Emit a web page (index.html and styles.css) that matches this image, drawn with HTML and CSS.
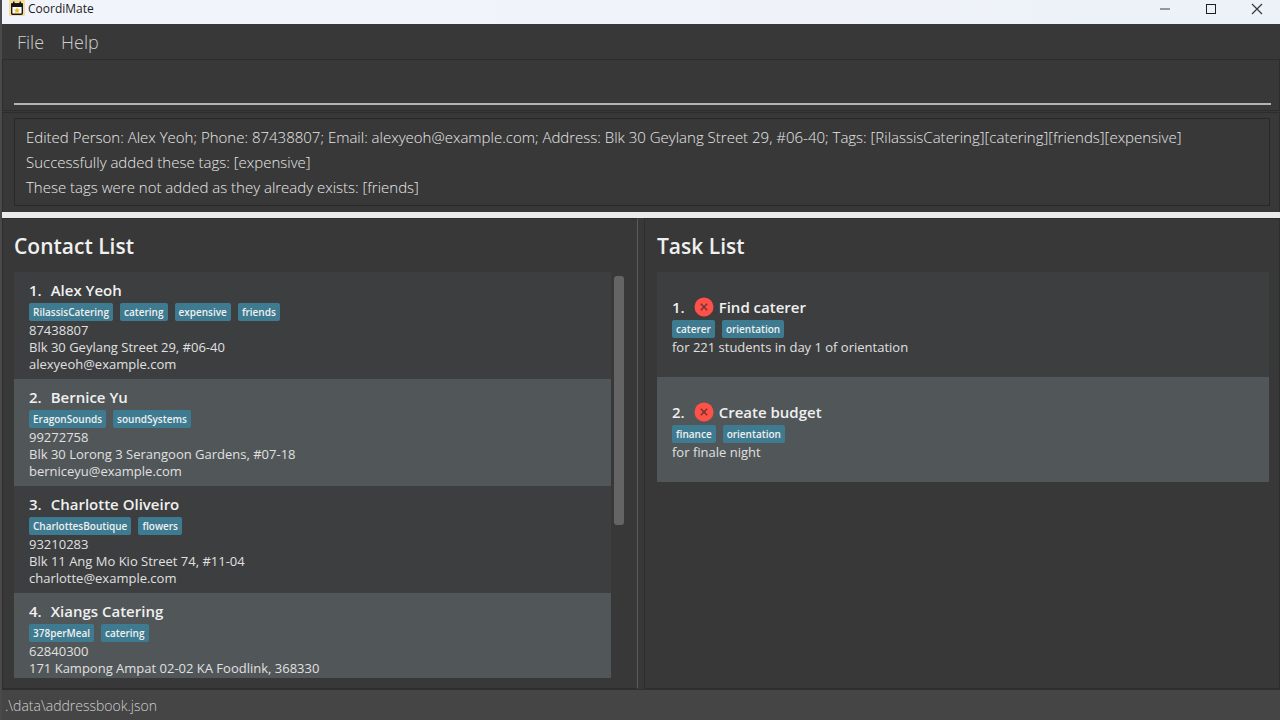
FILE: index.html
```html
<!DOCTYPE html>
<html lang="en">
<head>
<meta charset="utf-8">
<title>CoordiMate</title>
<link rel="stylesheet" href="styles.css">
</head>
<body>
<div class="window">
  <header class="titlebar">
    <svg class="app-icon" viewBox="0 0 16 16" aria-hidden="true">
      <rect width="16" height="16" rx="1" fill="#f6dc95"/>
      <path d="M2 3.500h2V1.500h1.500v2h5v-2H12v2h2V7H2z" fill="#15171c"/>
      <rect x="2.700" y="4" width="10.600" height="10.300" rx="1" fill="#fff" stroke="#15171c" stroke-width="1.400"/>
      <path d="M2.500 3.500h11V7h-11z" fill="#15171c"/>
      <path d="M8 7.600l1 1.700 1.900.4-1.300 1.400.2 1.900L8 12.200 6.200 13l.2-1.900-1.300-1.400L7 9.300z" fill="#f8b91c"/>
    </svg>
    <span class="app-name">CoordiMate</span>
    <div class="window-controls">
      <button class="window-button" aria-label="Minimize"><svg viewBox="0 0 12 12"><path d="M1 6h10" stroke="#777b80" stroke-width="1.500"/></svg></button>
      <button class="window-button" aria-label="Maximize"><svg viewBox="0 0 12 12"><rect x="1.500" y="1.500" width="9" height="9" fill="none" stroke="#1d1f22"/></svg></button>
      <button class="window-button" aria-label="Close"><svg viewBox="0 0 12 12"><path d="M1 1l10 10M11 1L1 11" stroke="#34373b" stroke-width="1.200"/></svg></button>
    </div>
  </header>
  <nav class="menubar">
    <button class="menu">File</button>
    <button class="menu">Help</button>
  </nav>
  <div class="command-pane">
    <input class="command-box" type="text" aria-label="Command">
  </div>
  <div class="result-pane">
    <textarea class="result-box" rows="3" readonly aria-label="Result">Edited Person: Alex Yeoh; Phone: 87438807; Email: alexyeoh@example.com; Address: Blk 30 Geylang Street 29, #06-40; Tags: [RilassisCatering][catering][friends][expensive]
Successfully added these tags: [expensive]
These tags were not added as they already exists: [friends]</textarea>
  </div>
  <main class="panels">
    <section class="panel contacts">
      <h1 class="panel-title">Contact List</h1>
      <div class="scroll-area">
        <ul class="list">
          <li class="card">
            <h2 class="card-title"><span class="index">1.</span>Alex Yeoh</h2>
            <div class="tags"><span class="tag">RilassisCatering</span><span class="tag">catering</span><span class="tag">expensive</span><span class="tag">friends</span></div>
            <p class="detail">87438807</p>
            <p class="detail">Blk 30 Geylang Street 29, #06-40</p>
            <p class="detail">alexyeoh@example.com</p>
          </li>
          <li class="card">
            <h2 class="card-title"><span class="index">2.</span>Bernice Yu</h2>
            <div class="tags"><span class="tag">EragonSounds</span><span class="tag">soundSystems</span></div>
            <p class="detail">99272758</p>
            <p class="detail">Blk 30 Lorong 3 Serangoon Gardens, #07-18</p>
            <p class="detail">berniceyu@example.com</p>
          </li>
          <li class="card">
            <h2 class="card-title"><span class="index">3.</span>Charlotte Oliveiro</h2>
            <div class="tags"><span class="tag">CharlottesBoutique</span><span class="tag">flowers</span></div>
            <p class="detail">93210283</p>
            <p class="detail">Blk 11 Ang Mo Kio Street 74, #11-04</p>
            <p class="detail">charlotte@example.com</p>
          </li>
          <li class="card">
            <h2 class="card-title"><span class="index">4.</span>Xiangs Catering</h2>
            <div class="tags"><span class="tag">378perMeal</span><span class="tag">catering</span></div>
            <p class="detail">62840300</p>
            <p class="detail">171 Kampong Ampat 02-02 KA Foodlink, 368330</p>
          </li>
        </ul>
        <div class="scrollbar"><div class="thumb"></div></div>
      </div>
    </section>
    <section class="panel tasks">
      <h1 class="panel-title">Task List</h1>
      <ul class="list">
        <li class="card task">
          <h2 class="card-title"><span class="index">1.</span><svg class="status-icon" viewBox="0 0 20 20" role="img" aria-label="Not done"><circle cx="10" cy="10" r="9.500" fill="#ff5148"/><path d="M6.800 6.800l6.400 6.400M13.200 6.800l-6.400 6.400" stroke="#6d3533" stroke-width="1.500"/></svg>Find caterer</h2>
          <div class="tags"><span class="tag">caterer</span><span class="tag">orientation</span></div>
          <p class="detail">for 221 students in day 1 of orientation</p>
        </li>
        <li class="card task">
          <h2 class="card-title"><span class="index">2.</span><svg class="status-icon" viewBox="0 0 20 20" role="img" aria-label="Not done"><circle cx="10" cy="10" r="9.500" fill="#ff5148"/><path d="M6.800 6.800l6.400 6.400M13.200 6.800l-6.400 6.400" stroke="#6d3533" stroke-width="1.500"/></svg>Create budget</h2>
          <div class="tags"><span class="tag">finance</span><span class="tag">orientation</span></div>
          <p class="detail">for finale night</p>
        </li>
      </ul>
    </section>
  </main>
  <footer class="statusbar">.\data\addressbook.json</footer>
</div>
</body>
</html>
```
FILE: styles.css
```css
* {
  box-sizing: border-box;
}

body {
  margin: 0;
  background: #383838;
  color: #f0f0f0;
  font-family: "Open Sans", "Noto Sans", sans-serif;
}

.window {
  display: flex;
  flex-direction: column;
  height: 100vh;
  border-left: 2px solid #4a4a4a;
}

.titlebar {
  display: flex;
  align-items: flex-start;
  flex: none;
  height: 24px;
  padding-left: 7px;
  background: linear-gradient(90deg, #f2f4fb, #edf2f8);
  color: #1b1b1b;
  font-size: 12px;
  line-height: 18px;
}

.app-icon {
  width: 16px;
  height: 16px;
  margin-right: 3px;
}

.window-controls {
  display: flex;
  margin-left: auto;
}

.window-button {
  display: flex;
  align-items: center;
  justify-content: center;
  width: 46px;
  height: 18px;
  padding: 0;
  border: 0;
  background: none;
}

.window-button svg {
  width: 12px;
  height: 12px;
}

.menubar {
  display: flex;
  align-items: center;
  flex: none;
  gap: 17px;
  height: 35px;
  padding: 0 15px;
}

.menu {
  padding: 0;
  border: 0;
  background: none;
  color: #cfcfcf;
  font: 300 18px/24px "Open Sans", "Noto Sans", sans-serif;
}

.command-pane {
  flex: none;
  padding: 10px 8px 5px 11px;
  border: 1px solid #2d2d2d;
}

.command-box {
  display: block;
  width: 100%;
  height: 35px;
  padding: 0;
  border: 0;
  border-bottom: 2px solid #b4b4b4;
  outline: 0;
  background: transparent;
  color: #fff;
  font: 300 18px/24px "Open Sans", "Noto Sans", sans-serif;
}

.result-pane {
  flex: none;
  margin-top: 1px;
  padding: 5px 9px 6px 11px;
  border: 1px solid #2d2d2d;
  border-bottom: 0;
}

.result-box {
  display: block;
  width: 100%;
  height: 88px;
  padding: 6px 11px;
  border: 1px solid #282828;
  outline: 0;
  overflow: hidden;
  resize: none;
  background: transparent;
  color: #e8e8e8;
  font: 300 15px/25px "Open Sans", "Noto Sans", sans-serif;
}

.panels {
  display: grid;
  grid-template-columns: minmax(0, 1fr) minmax(0, 1fr);
  grid-template-rows: minmax(0, 1fr);
  flex: 1;
  gap: 6px;
  min-height: 0;
  border-top: 6px solid #ebebeb;
}

.panel {
  display: flex;
  flex-direction: column;
  border: 1px solid #2d2d2d;
}

.contacts {
  padding: 0 13px 10px 11px;
  border-right: 1px solid #5a5a5a;
}

.tasks {
  padding: 0 10px 10px 12px;
}

.panel-title {
  flex: none;
  margin: 0;
  padding: 12px 0 11px;
  font-size: 21px;
  font-weight: 600;
  line-height: 30px;
}

.scroll-area {
  display: flex;
  flex: 1;
  gap: 3px;
  min-height: 0;
}

.list {
  flex: 1;
  min-width: 0;
  margin: 0;
  padding: 0;
  overflow: hidden;
  list-style: none;
}

.scrollbar {
  flex: none;
  width: 10px;
  padding-top: 4px;
}

.thumb {
  height: 62%;
  border-radius: 3px;
  background: #646464;
}

.card {
  padding: 7px 15px 6px;
  background: #3c3e3f;
}

.card:nth-child(even) {
  background: #515658;
}

.task {
  padding: 24px 15px 21px;
}

.card-title {
  display: flex;
  align-items: center;
  margin: 0 0 2px;
  font-size: 15px;
  font-weight: 600;
  line-height: 22px;
}

.index {
  margin-right: 9px;
}

.status-icon {
  width: 20px;
  height: 20px;
  margin-right: 5px;
}

.tags {
  display: flex;
  gap: 7px;
  margin-bottom: 1px;
}

.tag {
  padding: 0 4px;
  border-radius: 2px;
  background: #3e7b91;
  font-size: 10px;
  font-weight: 600;
  line-height: 18px;
}

.detail {
  margin: 0;
  color: #e0e0e0;
  font-size: 13px;
  line-height: 17px;
}

.statusbar {
  flex: none;
  height: 31px;
  padding: 4px 3px;
  border-top: 1px solid #303030;
  background: #454545;
  color: #cfcfcf;
  font-size: 14px;
  font-weight: 300;
  line-height: 24px;
}
```
